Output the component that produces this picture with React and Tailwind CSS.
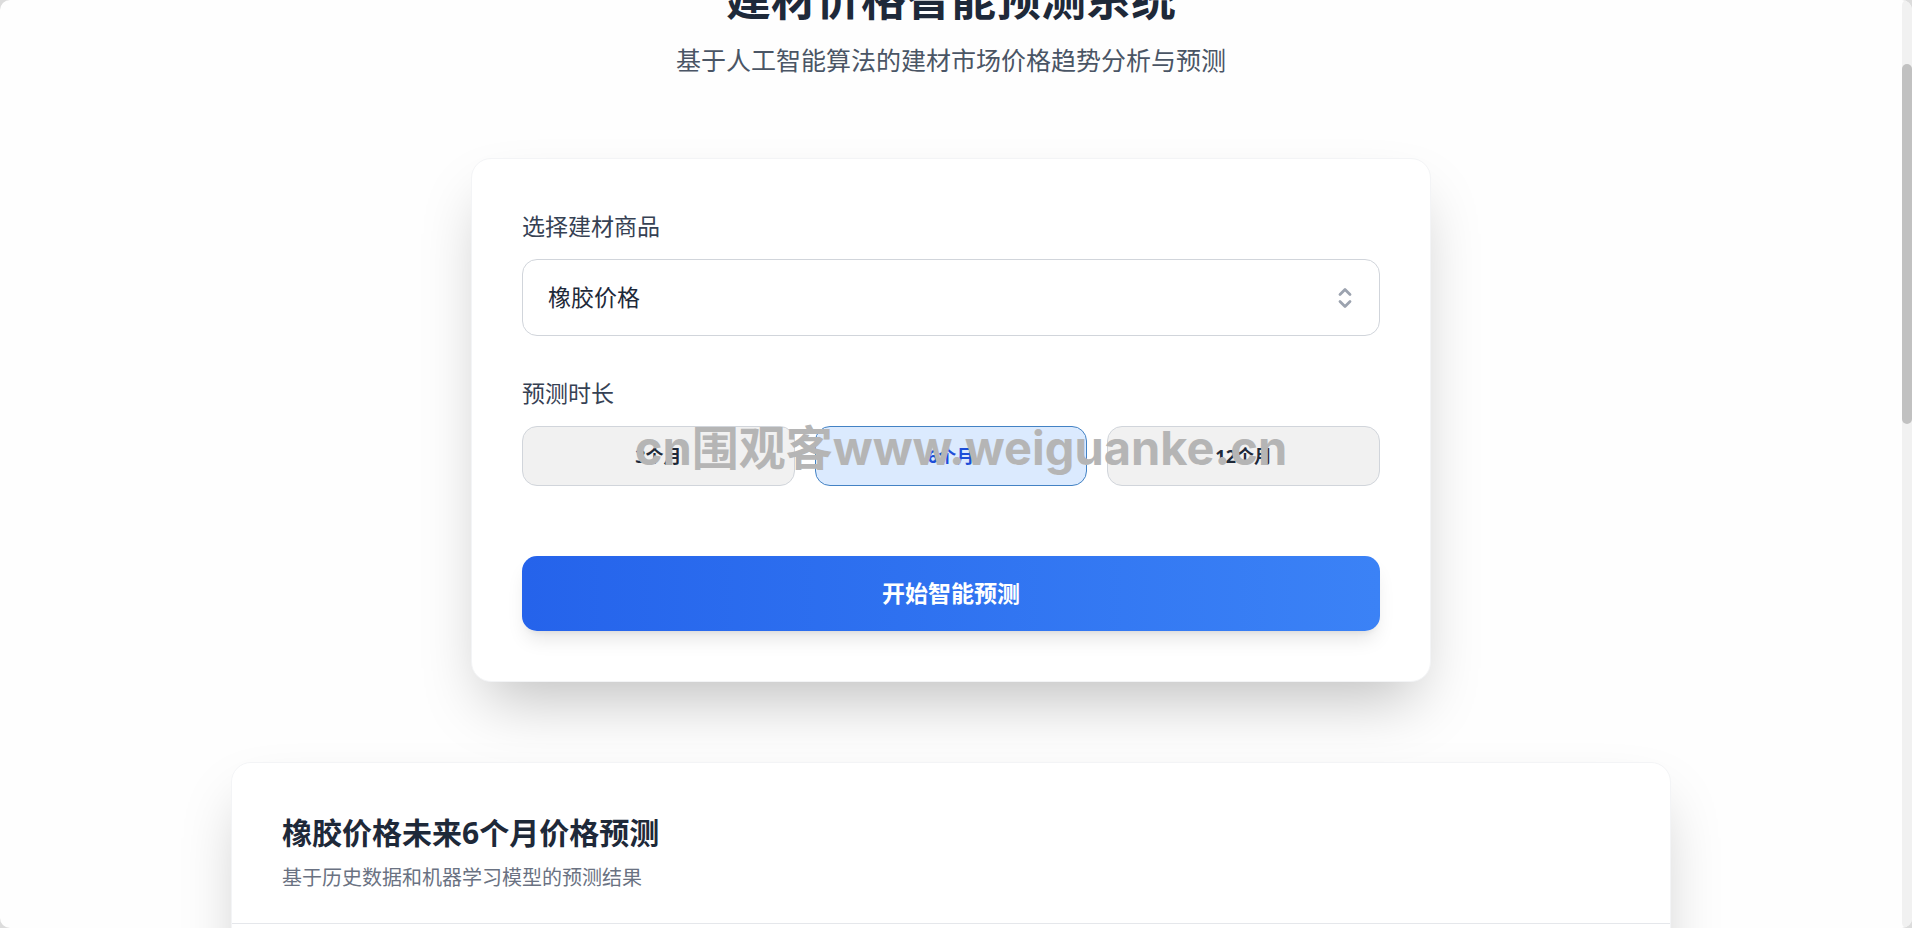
import React, { useState } from "react";

const materials = ["橡胶价格", "水泥价格", "钢材价格", "玻璃价格"];
const durations = [3, 6, 12];

function PageHeader() {
  return (
    <header className="-mt-[26px] text-center">
      <h1 className="text-[45px] leading-[50px] font-bold text-gray-800">建材价格智能预测系统</h1>
      <p className="mt-[19px] text-[25px] leading-[35px] text-gray-600">
        基于人工智能算法的建材市场价格趋势分析与预测
      </p>
    </header>
  );
}

function MaterialSelect({ value, onChange }) {
  return (
    <div>
      <label htmlFor="material" className="block text-[23px] leading-[35px] text-gray-700">
        选择建材商品
      </label>
      <div className="relative mt-[15px]">
        <select
          id="material"
          value={value}
          onChange={(e) => onChange(e.target.value)}
          className="block h-[77px] w-full appearance-none rounded-[15px] border border-[#d1d5db] bg-white px-[25px] text-[23px] text-gray-800"
        >
          {materials.map((name) => (
            <option key={name} value={name}>{name}</option>
          ))}
        </select>
        <svg
          className="pointer-events-none absolute inset-y-0 right-[22px] my-auto h-[26px] w-[26px] text-[#9ca3af]"
          viewBox="0 0 26 26"
          fill="none"
          stroke="currentColor"
          strokeWidth="2.8"
          strokeLinecap="round"
          strokeLinejoin="round"
          aria-hidden="true"
        >
          <path d="M8 9.5l5-5 5 5M8 16.5l5 5 5-5" />
        </svg>
      </div>
    </div>
  );
}

function DurationPicker({ value, onChange }) {
  return (
    <div className="mt-10" role="group" aria-labelledby="duration-label">
      <p id="duration-label" className="text-[23px] leading-[35px] text-gray-700">预测时长</p>
      <div className="relative mt-[15px] grid grid-cols-3 gap-5">
        {durations.map((months) => (
          <button
            key={months}
            type="button"
            aria-pressed={value === months}
            onClick={() => onChange(months)}
            className={
              value === months
                ? "h-[60px] rounded-[15px] border border-[#4382c4] bg-[#dbeafe] text-[18px] font-bold text-[#1d4ed8]"
                : "h-[60px] rounded-[15px] border border-[#d1d5db] bg-[#f1f1f1] text-[18px] font-bold text-gray-800"
            }
          >
            {months}个月
          </button>
        ))}
        <Watermark />
      </div>
    </div>
  );
}

function Watermark() {
  return (
    <div className="pointer-events-none absolute inset-x-0 -top-2 pl-5 text-center font-['Inter','Noto_Sans_CJK_SC',sans-serif] text-[47px] leading-[60px] font-bold whitespace-nowrap text-[#b5b5b5]">
      cn围观客www.weiguanke.cn
    </div>
  );
}

function ForecastForm({ material, setMaterial, months, setMonths, onSubmit }) {
  return (
    <form
      onSubmit={onSubmit}
      className="mx-auto mt-20 w-full max-w-[960px] rounded-[20px] border border-[#f3f4f6] bg-white p-[50px] shadow-[0_31px_62px_-15px_rgba(0,0,0,0.25)]"
    >
      <MaterialSelect value={material} onChange={setMaterial} />
      <DurationPicker value={months} onChange={setMonths} />
      <button
        type="submit"
        className="mt-[70px] h-[75px] w-full rounded-[15px] bg-linear-to-r from-[#2563eb] to-[#3b82f6] text-[23px] font-bold text-white shadow-[0_12px_19px_-4px_rgba(0,0,0,0.1),0_5px_7px_-5px_rgba(0,0,0,0.1)]"
      >
        开始智能预测
      </button>
    </form>
  );
}

function ForecastResult({ material, months }) {
  return (
    <section className="mx-auto mt-20 w-full max-w-[1440px] rounded-[20px] border border-[#f3f4f6] bg-white shadow-[0_31px_62px_-15px_rgba(0,0,0,0.25)]">
      <div className="border-b border-[#e5e7eb] px-[50px] pt-[50px] pb-[30px]">
        <h2 className="text-[30px] leading-[40px] font-bold text-gray-800">
          {material}未来{months}个月价格预测
        </h2>
        <p className="mt-[10px] text-[20px] leading-[30px] text-gray-500">
          基于历史数据和机器学习模型的预测结果
        </p>
      </div>
      <div className="h-[600px]" />
    </section>
  );
}

export default function App() {
  const [material, setMaterial] = useState("橡胶价格");
  const [months, setMonths] = useState(6);
  const [result, setResult] = useState({ material: "橡胶价格", months: 6 });

  const handleSubmit = (e) => {
    e.preventDefault();
    setResult({ material, months });
  };

  return (
    <div className="h-screen bg-[#dcdcdc] font-['Noto_Sans','Noto_Sans_CJK_SC',sans-serif]">
      <div className="flex h-full overflow-hidden rounded-[10px] bg-[#fefefe]">
        <main className="min-w-0 flex-1">
          <PageHeader />
          <ForecastForm
            material={material}
            setMaterial={setMaterial}
            months={months}
            setMonths={setMonths}
            onSubmit={handleSubmit}
          />
          <ForecastResult material={result.material} months={result.months} />
        </main>
        {/* Rail de défilement */}
        <div className="w-[10px] shrink-0 rounded-[5px] bg-[#f1f1f1] pt-16">
          <div className="h-[360px] rounded-[5px] bg-[#c1c1c1]" />
        </div>
      </div>
    </div>
  );
}
